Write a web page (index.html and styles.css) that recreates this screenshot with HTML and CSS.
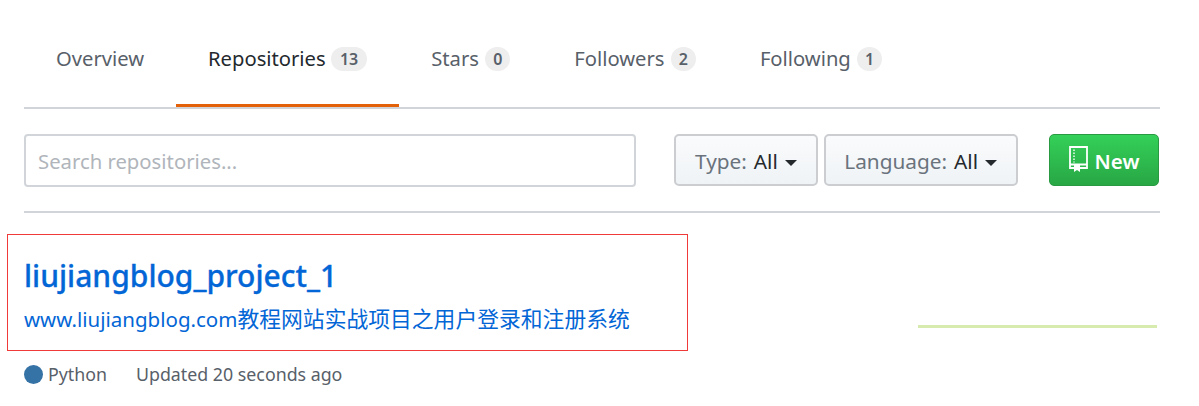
FILE: index.html
```html
<!DOCTYPE html>
<html lang="en">
<head>
<meta charset="UTF-8">
<title>Repositories</title>
<link rel="stylesheet" href="styles.css">
</head>
<body>

<div class="page">
  <!-- Tabs -->
  <nav class="tabs">
    <a class="tab">Overview</a>
    <a class="tab active">Repositories <span class="counter">13</span></a>
    <a class="tab">Stars <span class="counter">0</span></a>
    <a class="tab">Followers <span class="counter">2</span></a>
    <a class="tab">Following <span class="counter">1</span></a>
  </nav>

  <!-- Search and filters -->
  <div class="filters">
    <input class="search" type="text" placeholder="Search repositories...">
    <div class="select-group">
      <button class="select-btn"><span class="select-label">Type:</span> All<i class="caret"></i></button>
      <button class="select-btn select-lang"><span class="select-label">Language:</span> All<i class="caret"></i></button>
    </div>
    <button class="new-btn">
      <svg class="book-icon" width="19" height="26" viewBox="0 0 19 26">
        <path d="M1 1h17v21H1zM1 18.500h17" fill="none" stroke="#fff" stroke-width="1.800"/>
        <path d="M5 3.500v1.500M5 6.500v1.500M5 9.500v1.500M5 12.500v1.500M5 15.500v1" stroke="#fff" stroke-width="1.400"/>
        <path d="M5 19h6v7l-3-2-3 2z" fill="#fff"/>
      </svg>
      New
    </button>
  </div>

  <!-- Repo list -->
  <div class="repo">
    <div class="repo-main">
      <div class="highlight"></div>
      <h3 class="repo-name">liujiangblog_project_1</h3>
      <p class="repo-desc"><span class="desc-latin">www.liujiangblog.com</span>教程网站实战项目之用户登录和注册系统</p>
      <div class="repo-meta">
        <span class="lang-dot"></span>
        <span class="lang">Python</span>
        <span>Updated 20 seconds ago</span>
      </div>
    </div>
    <div class="graph"></div>
  </div>
</div>

</body>
</html>
```

FILE: styles.css
```css
body {
  font-family: "Noto Sans", "Noto Sans CJK SC", sans-serif;
  margin: 0;
  padding: 0;
  background-color: #fff;
}
.page {
  width: 1136px;
  margin-left: 24px;
}
.tabs {
  display: flex;
  height: 109px;
  box-sizing: border-box;
  padding-top: 28px;
  border-bottom: 2px solid #d1d5da;
}
.tab {
  height: 79px;
  box-sizing: border-box;
  padding: 15px 32px 0;
  font-size: 20.200px;
  line-height: 30px;
  color: #586069;
}
.tab.active {
  padding-right: 32.500px;
  color: #24292e;
  border-bottom: 3px solid #e36209;
}
.counter {
  display: inline-block;
  padding: 0 8px;
  margin-left: 1px;
  font-size: 16px;
  font-weight: 600;
  line-height: 24px;
  text-align: center;
  color: #586069;
  background-color: #eee;
  border-radius: 12px;
  vertical-align: 1px;
}
.tab.active .counter {
  padding: 0 8.500px;
  margin-left: 0.500px;
}
.filters {
  display: flex;
  align-items: flex-start;
  height: 104px;
  box-sizing: border-box;
  padding-top: 25px;
  border-bottom: 2px solid #d1d5da;
}
.search {
  width: 612px;
  height: 53px;
  box-sizing: border-box;
  padding: 0 12px;
  font-family: inherit;
  font-size: 20.300px;
  border: 2px solid #d1d5da;
  border-radius: 4px;
}
.search::placeholder {
  color: #b0b5bb;
}
.select-group {
  display: flex;
  gap: 6px;
  margin-left: 38px;
}
.select-btn {
  height: 52px;
  box-sizing: border-box;
  padding: 2px 19.500px 0 19px;
  font-family: inherit;
  font-size: 20.800px;
  color: #24292e;
  background: linear-gradient(#fafbfc, #eff3f6);
  border: 2px solid #cbcdd1;
  border-radius: 5px;
}
.select-lang {
  padding-left: 18px;
  padding-right: 18.500px;
}
.select-label {
  margin-right: 1.500px;
  color: #6a737d;
}
.caret {
  display: inline-block;
  margin-left: 7px;
  border-top: 6px solid #24292e;
  border-left: 6.500px solid transparent;
  border-right: 6.500px solid transparent;
  vertical-align: 3px;
}
.new-btn {
  display: flex;
  align-items: center;
  gap: 7px;
  height: 52px;
  width: 110px;
  box-sizing: border-box;
  margin-left: 31px;
  padding: 2px 0 0 19px;
  font-family: inherit;
  font-size: 20.500px;
  font-weight: 600;
  color: #fff;
  background: linear-gradient(#34d058, #28a745);
  border: 1px solid #2a9a42;
  border-radius: 5px;
}
.book-icon {
  margin-top: -4px;
}
.repo {
  display: flex;
  justify-content: space-between;
}
.repo-main {
  position: relative;
  padding-top: 44px;
}
/* red annotation drawn over the repo entry */
.highlight {
  position: absolute;
  top: 21px;
  left: -17px;
  width: 681px;
  height: 117px;
  box-sizing: border-box;
  border: 1px solid #f03a3a;
}
.repo-name {
  margin: 0;
  font-size: 30px;
  font-weight: 500;
  line-height: 38px;
  color: #0366d6;
  -webkit-text-stroke: 0.300px #0366d6;
}
.repo-desc {
  margin: 6px 0 0;
  font-size: 21.800px;
  line-height: 36px;
  color: #0366d6;
}
.desc-latin {
  font-size: 20.500px;
}
.repo-meta {
  display: flex;
  align-items: center;
  margin-top: 25px;
  font-size: 17.800px;
  line-height: 24px;
  color: #586069;
}
.lang-dot {
  width: 19px;
  height: 19px;
  margin-right: 5px;
  background-color: #3572a5;
  border-radius: 50%;
}
.lang {
  margin-right: 29px;
}
.graph {
  width: 239px;
  height: 3px;
  margin: 112px 3px 0 0;
  background-color: #d8ebae;
}
```
